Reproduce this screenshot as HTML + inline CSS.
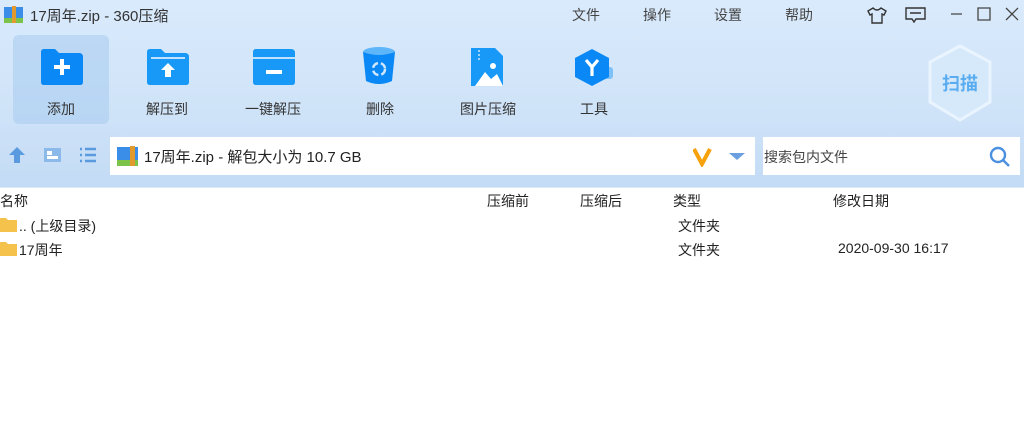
<!DOCTYPE html>
<html><head><meta charset="utf-8"><style>
*{margin:0;padding:0;box-sizing:border-box}
body{width:1024px;height:448px;overflow:hidden;background:#fff;font-family:"Liberation Sans","Noto Sans CJK SC",sans-serif;position:relative;color:#222}
.top{position:absolute;left:0;top:0;width:1024px;height:187px;background:linear-gradient(#d9eafc,#cfe3f8 60%,#c3dbf5)}
.abs{position:absolute}
.title{left:30px;top:5px;font-size:15px;color:#333}
.menu{top:5px;font-size:14px;color:#444}
.btn{position:absolute;top:35px;width:96px;height:89px;text-align:center}
.btn.sel{background:rgba(170,205,240,.6);border-radius:6px}
.btn svg{position:absolute;left:28px;top:14px}
.btn span{position:absolute;left:0;right:0;top:64px;font-size:14px;color:#333}
.addr{left:110px;top:137px;width:645px;height:38px;background:#fff}
.search{left:763px;top:137px;width:257px;height:38px;background:#fff}
.hdr{top:187px;left:0;width:1024px;height:25px;background:#fff;border-top:1px solid #dde9f5}
.hdr span{position:absolute;top:3px;font-size:14px;color:#222}
.row{position:absolute;font-size:14px;color:#222}
</style></head><body>
<div class="top"></div>
<svg class="abs" style="left:4px;top:6px" width="20" height="18"><rect x="0" y="1" width="19" height="16" fill="#3a8ee8"/><rect x="0" y="12" width="19" height="5" fill="#7cc34a"/><rect x="8" y="0" width="4" height="17" fill="#e39a2c"/></svg>
<div class="abs title">17周年.zip - 360压缩</div>
<div class="abs menu" style="left:572px">文件</div>
<div class="abs menu" style="left:643px">操作</div>
<div class="abs menu" style="left:714px">设置</div>
<div class="abs menu" style="left:785px">帮助</div>
<svg class="abs" style="left:866px;top:6px" width="22" height="18" fill="none" stroke="#333" stroke-width="1.4"><path d="M7 2 L2 5 L4 9 L6 8 V17 H16 V8 L18 9 L20 5 L15 2 Q11 6 7 2Z"/></svg>
<svg class="abs" style="left:905px;top:7px" width="21" height="17" fill="none" stroke="#333" stroke-width="1.4"><path d="M1 1H20V12H11L9 15L7 12H1Z M5 6H16"/></svg>
<svg class="abs" style="left:950px;top:7px" width="70" height="14" fill="none" stroke="#444" stroke-width="1.3"><path d="M1 7H12 M28 1H40V13H28Z M56 1L68 13 M68 1L56 13"/></svg>
<div class="btn sel" style="left:13px"><svg width="42" height="36"><path d="M0 3Q0 0 3 0H14L18 4H38Q42 4 42 8V33Q42 36 39 36H3Q0 36 0 33Z" fill="#0a88f5"/><path d="M21 10V26M13 18H29" stroke="#fff" stroke-width="4"/></svg><span>添加</span></div>
<div class="btn" style="left:119px"><svg width="42" height="36"><path d="M0 3Q0 0 3 0H14L18 4H38Q42 4 42 8V33Q42 36 39 36H3Q0 36 0 33Z" fill="#1898f7"/><rect x="4" y="8" width="34" height="2" fill="#bfe0ff"/><path d="M21 14L28 21H24V28H18V21H14Z" fill="#fff"/></svg><span>解压到</span></div>
<div class="btn" style="left:225px"><svg width="42" height="36"><path d="M0 3Q0 0 3 0H38Q42 0 42 4V33Q42 36 39 36H3Q0 36 0 33Z" fill="#1898f7"/><rect x="0" y="8" width="42" height="2" fill="#bfe0ff"/><rect x="13" y="21" width="16" height="4" fill="#fff"/></svg><span>一键解压</span></div>
<div class="btn" style="left:332px"><svg width="42" height="40" style="left:31px;top:12px"><ellipse cx="16" cy="5" rx="16" ry="5" fill="#5db5fa"/><path d="M0 5L3 34Q16 40 29 34L32 5Q16 11 0 5Z" fill="#0a88f5"/><circle cx="16" cy="22" r="6" fill="none" stroke="#cfe8ff" stroke-width="2.5" stroke-dasharray="7 3"/></svg><span>删除</span></div>
<div class="btn" style="left:440px"><svg width="42" height="40" style="left:31px;top:13px"><path d="M0 0H24L32 8V38H0Z" fill="#1898f7"/><path d="M4 38L14 24L20 31L26 26L32 38Z" fill="#fff"/><circle cx="22" cy="18" r="3" fill="#fff"/><path d="M8 2V14" stroke="#9fd2ff" stroke-width="2" stroke-dasharray="2 2"/></svg><span>图片压缩</span></div>
<div class="btn" style="left:546px"><svg width="46" height="40" style="left:29px;top:14px"><rect x="26" y="18" width="12" height="12" rx="3" fill="#7fc0f8"/><path d="M17 0L34 9V28L17 37L0 28V9Z" fill="#0a88f5"/><path d="M11 11L17 18L23 11M17 18V27" stroke="#fff" stroke-width="3.2" fill="none"/></svg><span>工具</span></div>
<svg class="abs" style="left:928px;top:44px" width="64" height="78"><path d="M32 2L62 18V58L32 76L2 58V18Z" fill="#d6e9fb" stroke="#e9f4ff" stroke-width="3"/><text x="32" y="46" text-anchor="middle" font-size="18" font-weight="bold" fill="#5aacf0" font-family="Noto Sans CJK SC,sans-serif">扫描</text></svg>
<svg class="abs" style="left:8px;top:146px" width="92" height="18"><path d="M9 1L17 9H12V17H6V9H1Z" fill="#5a9be0"/><rect x="36" y="2" width="17" height="14" fill="#8ab9ea"/><rect x="39" y="5" width="5" height="4" fill="#fff"/><rect x="39" y="10" width="11" height="3" fill="#fff"/><path d="M72 3H74M77 3H88M72 9H74M77 9H88M72 15H74M77 15H88" stroke="#5a9be0" stroke-width="2.5"/></svg>
<div class="abs addr"><svg class="abs" style="left:7px;top:8px" width="22" height="22"><rect x="0" y="2" width="21" height="19" fill="#3a8ee8"/><rect x="0" y="15" width="21" height="6" fill="#7cc34a"/><rect x="13" y="1" width="5" height="20" fill="#e39a2c"/></svg><div class="abs" style="left:34px;top:9px;font-size:15px">17周年.zip - 解包大小为 10.7 GB</div>
<svg class="abs" style="left:583px;top:10px" width="56" height="20"><path d="M1 2L9 17L17 2" stroke="#f7a10d" stroke-width="4" fill="none"/><path d="M36 6H52L44 13Z" fill="#6a9fe0"/></svg></div>
<div class="abs search"><div class="abs" style="left:1px;top:10px;font-size:14px;color:#444">搜索包内文件</div><svg class="abs" style="left:226px;top:9px" width="22" height="22" fill="none" stroke="#4a8fe0" stroke-width="2.4"><circle cx="9" cy="9" r="7"/><path d="M14 14L20 20"/></svg></div>
<div class="abs hdr"><span style="left:0">名称</span><span style="left:487px">压缩前</span><span style="left:580px">压缩后</span><span style="left:673px">类型</span><span style="left:833px">修改日期</span></div>
<svg class="abs" style="left:0;top:216px" width="18" height="40"><path d="M0 2H6L8 4H17V16H0Z M0 26H6L8 28H17V40H0Z" fill="#f5c34c"/></svg>
<div class="row" style="left:19px;top:216px">.. (上级目录)</div>
<div class="row" style="left:678px;top:216px">文件夹</div>
<div class="row" style="left:19px;top:240px">17周年</div>
<div class="row" style="left:678px;top:240px">文件夹</div>
<div class="row" style="left:838px;top:240px">2020-09-30 16:17</div>
</body></html>
